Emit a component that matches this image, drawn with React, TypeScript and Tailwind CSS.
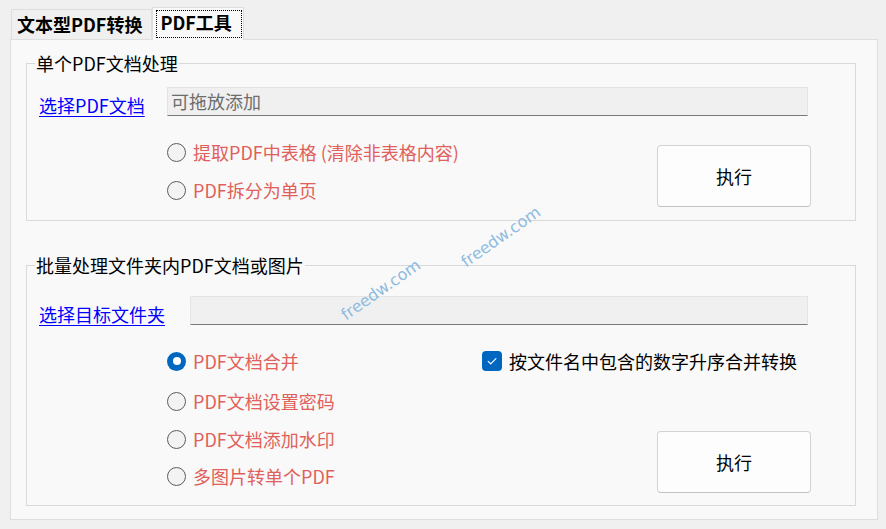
import React from "react";

const RED = "text-[#e0605a]";

function Radio({ checked, label, className = "" }: { checked?: boolean; label: string; className?: string }) {
  return (
    <div className={`flex items-center h-[24px] gap-[7px] ${className}`}>
      {checked ? (
        <span className="w-[19px] h-[19px] rounded-full bg-[#0067c0] flex items-center justify-center shrink-0">
          <span className="w-[8px] h-[8px] rounded-full bg-white" />
        </span>
      ) : (
        <span className="w-[19px] h-[19px] rounded-full border border-[#5c5c5c] bg-[#f3f3f3] shrink-0" />
      )}
      <span className={`text-[18px] leading-[24px] whitespace-nowrap ${RED}`}>{label}</span>
    </div>
  );
}

function ExecButton({ className = "" }: { className?: string }) {
  return (
    <div
      className={`w-[154px] h-[62px] rounded-[4px] border border-[#d3d3d3] border-b-[#c2c2c2] bg-[#fdfdfd] flex items-center justify-center text-[18px] text-black shrink-0 ${className}`}
    >
      执行
    </div>
  );
}

function Field({ width, text }: { width: string; text?: string }) {
  return (
    <div
      className={`${width} h-[29px] bg-[#f0f0f0] border border-[#e4e4e4] border-b-[#7a7a7a] pl-[3px] flex items-center text-[18px] text-[#6d6d6d] shrink-0`}
    >
      {text}
    </div>
  );
}

export default function App() {
  return (
    <div className="relative w-[886px] h-[529px] overflow-hidden bg-[#f0f0f0] font-['Noto_Sans_CJK_SC','Noto_Sans',sans-serif] text-black">
      {/* tabs */}
      <div className="flex items-end h-[39px] pl-[11px]">
        <div className="h-[30px] pl-[5px] pr-[9px] border border-b-0 border-[#dedede] bg-[#f0f0f0] flex items-center text-[18px] font-bold whitespace-nowrap">
          文本型PDF转换
        </div>
        <div className="relative z-10 h-[33px] -mb-px pt-[2px] pl-[3px] pr-[1px] border border-b-0 border-[#dedede] bg-[#f9f9f9]">
          <div className="w-[86px] h-[28px] border border-dotted border-black flex items-center pl-[3px] pb-[3px] text-[18px] font-bold whitespace-nowrap">
            PDF工具
          </div>
        </div>
      </div>

      {/* panel */}
      <div className="ml-[10px] w-[868px] h-[481px] border border-[#dedede] bg-[#f9f9f9] pt-[23px] pl-[15px]">
        {/* group 1 */}
        <div className="relative w-[830px] h-[158px] border border-[#d9d9d9]">
          <span className="absolute left-[8px] top-[-13px] px-[1px] bg-[#f9f9f9] text-[18px] leading-[24px] whitespace-nowrap">
            单个PDF文档处理
          </span>
          <div className="flex items-center h-[52px] pt-[23px]">
            <span className="relative top-[3px] ml-[12px] w-[128px] text-[18px] leading-[24px] text-[#0000ff] underline underline-offset-[3px] whitespace-nowrap">
              选择PDF文档
            </span>
            <Field width="w-[641px]" text="可拖放添加" />
          </div>
          <div className="flex mt-[24px]">
            <div className="ml-[140px] flex flex-col gap-[14px]">
              <Radio label="提取PDF中表格 (清除非表格内容)" />
              <Radio label="PDF拆分为单页" />
            </div>
            <ExecButton className="ml-auto mr-[44px] mt-[5px]" />
          </div>
        </div>

        {/* group 2 */}
        <div className="relative mt-[44px] w-[830px] h-[241px] border border-[#d9d9d9]">
          <span className="absolute left-[8px] top-[-13px] px-[1px] bg-[#f9f9f9] text-[18px] leading-[24px] whitespace-nowrap">
            批量处理文件夹内PDF文档或图片
          </span>
          <div className="flex items-center h-[59px] pt-[30px]">
            <span className="relative top-[3px] ml-[12px] w-[151px] text-[18px] leading-[24px] text-[#0000ff] underline underline-offset-[3px] whitespace-nowrap">
              选择目标文件夹
            </span>
            <Field width="w-[618px]" />
          </div>
          <div className="flex mt-[24px]">
            <div className="ml-[140px] w-[315px] flex flex-col">
              <Radio checked label="PDF文档合并" />
              <Radio label="PDF文档设置密码" className="mt-[16px]" />
              <Radio label="PDF文档添加水印" className="mt-[14px]" />
              <Radio label="多图片转单个PDF" className="mt-[13px]" />
            </div>
            <div className="flex-1 flex flex-col">
              <div className="flex items-center h-[24px] gap-[7px]">
                <span className="w-[20px] h-[20px] rounded-[4px] bg-[#0067c0] flex items-center justify-center shrink-0">
                  <svg width="20" height="20" viewBox="0 0 20 20" fill="none">
                    <path d="M6.2 10.4 L8.7 12.9 L13.9 7.6" stroke="white" strokeWidth="1.2" strokeLinecap="round" strokeLinejoin="round" />
                  </svg>
                </span>
                <span className="text-[18px] leading-[24px] whitespace-nowrap">按文件名中包含的数字升序合并转换</span>
              </div>
              <ExecButton className="self-end mr-[44px] mt-[58px]" />
            </div>
          </div>
        </div>
      </div>

      {/* watermarks */}
      <span className="absolute left-[381px] top-[290px] -translate-x-1/2 -translate-y-1/2 rotate-[-35deg] font-['DejaVu_Sans',sans-serif] text-[16px] leading-none text-[#8fbbe0] whitespace-nowrap pointer-events-none">
        freedw.com
      </span>
      <span className="absolute left-[501px] top-[237px] -translate-x-1/2 -translate-y-1/2 rotate-[-35deg] font-['DejaVu_Sans',sans-serif] text-[16px] leading-none text-[#8fbbe0] whitespace-nowrap pointer-events-none">
        freedw.com
      </span>
    </div>
  );
}
